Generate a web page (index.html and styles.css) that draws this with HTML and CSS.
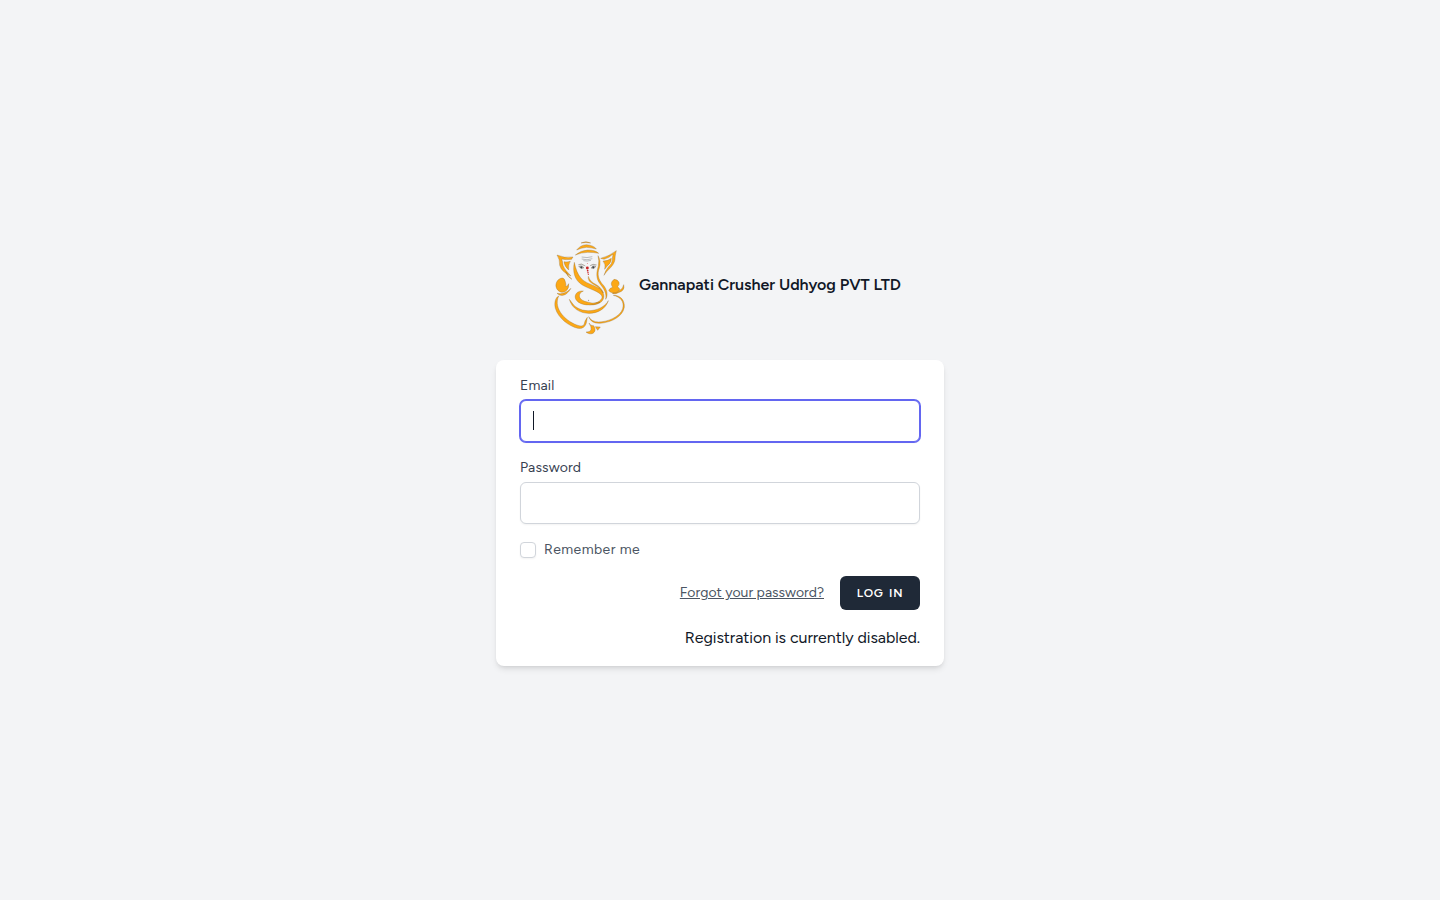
FILE: index.html
```html
<!DOCTYPE html>
<html lang="en">
<head>
<meta charset="utf-8">
<title>Log in</title>
<link rel="stylesheet" href="styles.css">
</head>
<body>
<main class="page">
  <header class="brand">
    <svg class="logo" viewBox="0 0 270 315" aria-hidden="true">
      <g class="gold">
        <path d="M108 24Q123 16 137 24Q123 21 108 24Z"/>
        <path d="M95 45Q106 30 124 29Q147 31 154 42Q139 38 124 37Q108 39 95 45Z"/>
        <path d="M91 60Q107 46 128 45Q151 45 161 55Q146 52 128 52Q108 53 91 60Z"/>
        <path d="M36 60Q58 70 84 66Q81 70 80 73Q62 75 50 72Q54 82 54 91Q58 104 78 123Q50 112 44 91Q45 73 36 60Z"/>
        <path d="M57 80Q66 82 76 79Q69 89 71 105Q58 94 57 80Z"/>
        <path d="M167 70Q190 65 214 47Q210 60 210 73C207 95 187 103 177 121Q182 105 190 96Q203 86 202 71L204 57Q193 69 177 73Z"/>
        <path d="M174 78Q187 79 199 70Q199 84 186 94L179 103Q183 88 174 78Z"/>
        <path d="M88 82Q94 113 107 128C120 145 145 149 163 160C183 174 181 200 157 207Q145 211 133 209C160 204 176 192 170 182C161 168 134 163 112 150C89 136 82 111 88 82Z"/>
        <path d="M159 62Q169 77 163 99C155 119 162 134 171 146C183 158 192 176 182 193C186 175 176 161 166 148C151 129 155 111 160 93Q163 77 159 62Z"/>
        <path d="M130 124Q132 135 145 144C159 151 171 160 175 174C167 161 156 153 144 147Q127 138 130 124Z"/>
        <path d="M52 129C39 130 31 143 33 155C37 172 56 177 65 166Q72 160 71 146Q67 155 62 154Q64 148 61 140Q59 130 52 129Z"/>
        <path d="M36 175Q58 181 78 160Q62 187 43 180Z"/>
        <path d="M62 110Q69 124 81 133Q67 126 62 110Z"/>
        <path d="M207 133Q218 133 222 142Q225 149 218 155L225 163C218 177 197 177 191 166Q195 158 203 157Q193 144 207 133Z"/>
        <path d="M236 149Q241 167 220 173Q209 179 202 175Q217 174 225 166Q234 160 236 149Z"/>
        <path d="M115 168C97 166 85 180 93 194C106 214 143 213 165 202Q140 208 119 199C99 191 98 176 115 168Z"/>
        <path d="M73 193C88 249 174 248 190 197C174 227 116 240 86 210Q80 202 73 193Z"/>
        <path d="M41 183C31 188 27 203 31 220C40 250 71 273 98 280Q119 283 124 264L127 247Q119 257 117 269Q112 275 102 272C66 262 23 223 41 183Z"/>
        <path d="M205 181C225 180 240 195 238 217C232 251 186 265 162 265Q138 265 131 245Q139 260 161 261C184 261 225 247 233 221C239 199 225 186 205 181Z"/>
        <path d="M132 264Q136 273 146 272Q152 280 150 287C145 301 129 297 123 291Q134 292 138 285Q140 276 132 264Z"/>
        <path d="M151 275L166 276L158 286Z"/>
      </g>
      <g class="brow"><path d="M110 66Q126 70 142 65M110 72Q126 77 142 71M115 77Q126 80 138 76"/></g>
      <g class="eye"><path d="M101 94Q109 89 117 98Q109 105 101 94ZM138 99Q144 89 153 94Q148 104 138 99Z"/><path d="M100 89Q109 83 121 93M135 92Q144 85 155 90"/></g>
      <g class="pupil"><circle cx="109" cy="97" r="3.2"/><circle cx="145" cy="97" r="3.2"/><circle cx="131" cy="196" r="1.4"/></g>
      <g class="red"><circle cx="127" cy="99" r="4.3"/><circle cx="128" cy="107" r="2.5"/><circle cx="129" cy="113" r="2.2"/><circle cx="130" cy="118" r="1.8"/><circle cx="127" cy="86" r="1.3"/></g>
    </svg>
    <h1 class="name">Gannapati Crusher Udhyog PVT LTD</h1>
  </header>
  <form class="card">
    <label class="label" for="email">Email</label>
    <div class="field focused"><input class="input" id="email" type="email"><span class="caret"></span></div>
    <label class="label next" for="password">Password</label>
    <div class="field"><input class="input" id="password" type="password"></div>
    <label class="remember"><input class="check" type="checkbox"><span>Remember me</span></label>
    <div class="actions">
      <a class="forgot" href="#">Forgot your password?</a>
      <button class="login" type="button">LOG IN</button>
    </div>
    <p class="notice">Registration is currently disabled.</p>
  </form>
</main>
</body>
</html>
```
FILE: styles.css
```css
* { box-sizing: border-box; }
body { margin: 0; background: #f3f4f6; color: #111827; font-family: Figtree, Inter, sans-serif; font-size: 16px; line-height: 24px; }
.page { min-height: 900px; padding-top: 235px; display: flex; flex-direction: column; align-items: center; }
.brand { display: flex; width: 362px; height: 125px; padding-left: 6px; gap: 4px; }
.logo { width: 90px; height: 105px; flex: none; }
.name { margin: 38px 0 0; font-size: 16px; line-height: 24px; font-weight: 600; white-space: nowrap; letter-spacing: -0.02px; }
.gold { fill: #fca816; stroke: #80602d; stroke-width: .9; stroke-linejoin: round; }
.brow { fill: none; stroke: #a5a7ab; stroke-width: 2.2; }
.eye { fill: #c5c8cb; stroke: #8e8172; stroke-width: 1.6; }
.pupil { fill: #3c4048; }
.red { fill: #c92226; }
.card { width: 448px; height: 306px; padding: 16px 24px; background: #fff; border-radius: 8px; box-shadow: 0 4px 6px -1px rgba(0,0,0,.1), 0 2px 4px -2px rgba(0,0,0,.1); }
.label { display: block; height: 20px; line-height: 20px; font-size: 14px; font-weight: 450; letter-spacing: .15px; color: #374151; }
.next { margin-top: 16px; }
.field { position: relative; height: 42px; margin-top: 4px; }
.input { display: block; width: 100%; height: 42px; margin: 0; padding: 8px 12px; border: 1px solid #d1d5db; border-radius: 6px; background: #fff; box-shadow: 0 1px 2px rgba(0,0,0,.05); font: inherit; outline: none; }
.focused .input { border-color: #6366f1; box-shadow: 0 0 0 1px #6366f1, 0 1px 2px rgba(0,0,0,.05); }
.caret { position: absolute; left: 13px; top: 11px; width: 1px; height: 19px; background: #111827; }
.remember { display: flex; align-items: center; gap: 8px; height: 20px; margin-top: 16px; font-size: 14px; line-height: 20px; letter-spacing: .42px; color: #4b5563; }
.check { appearance: none; width: 16px; height: 16px; margin: 0; border: 1px solid #d1d5db; border-radius: 4px; background: #fff; box-shadow: 0 1px 2px rgba(0,0,0,.05); }
.actions { display: flex; align-items: center; justify-content: flex-end; gap: 16px; height: 34px; margin-top: 16px; }
.forgot { font-size: 14px; line-height: 20px; color: #4b5563; text-decoration: underline; }
.login { width: 80px; height: 34px; padding: 0; border: 0; border-radius: 6px; background: #1f2937; color: #fff; font: 600 12px/16px Figtree, Inter, sans-serif; letter-spacing: .7px; word-spacing: 2px; }
.notice { margin: 16px 0 0; text-align: right; line-height: 24px; letter-spacing: -.05px; }
```
